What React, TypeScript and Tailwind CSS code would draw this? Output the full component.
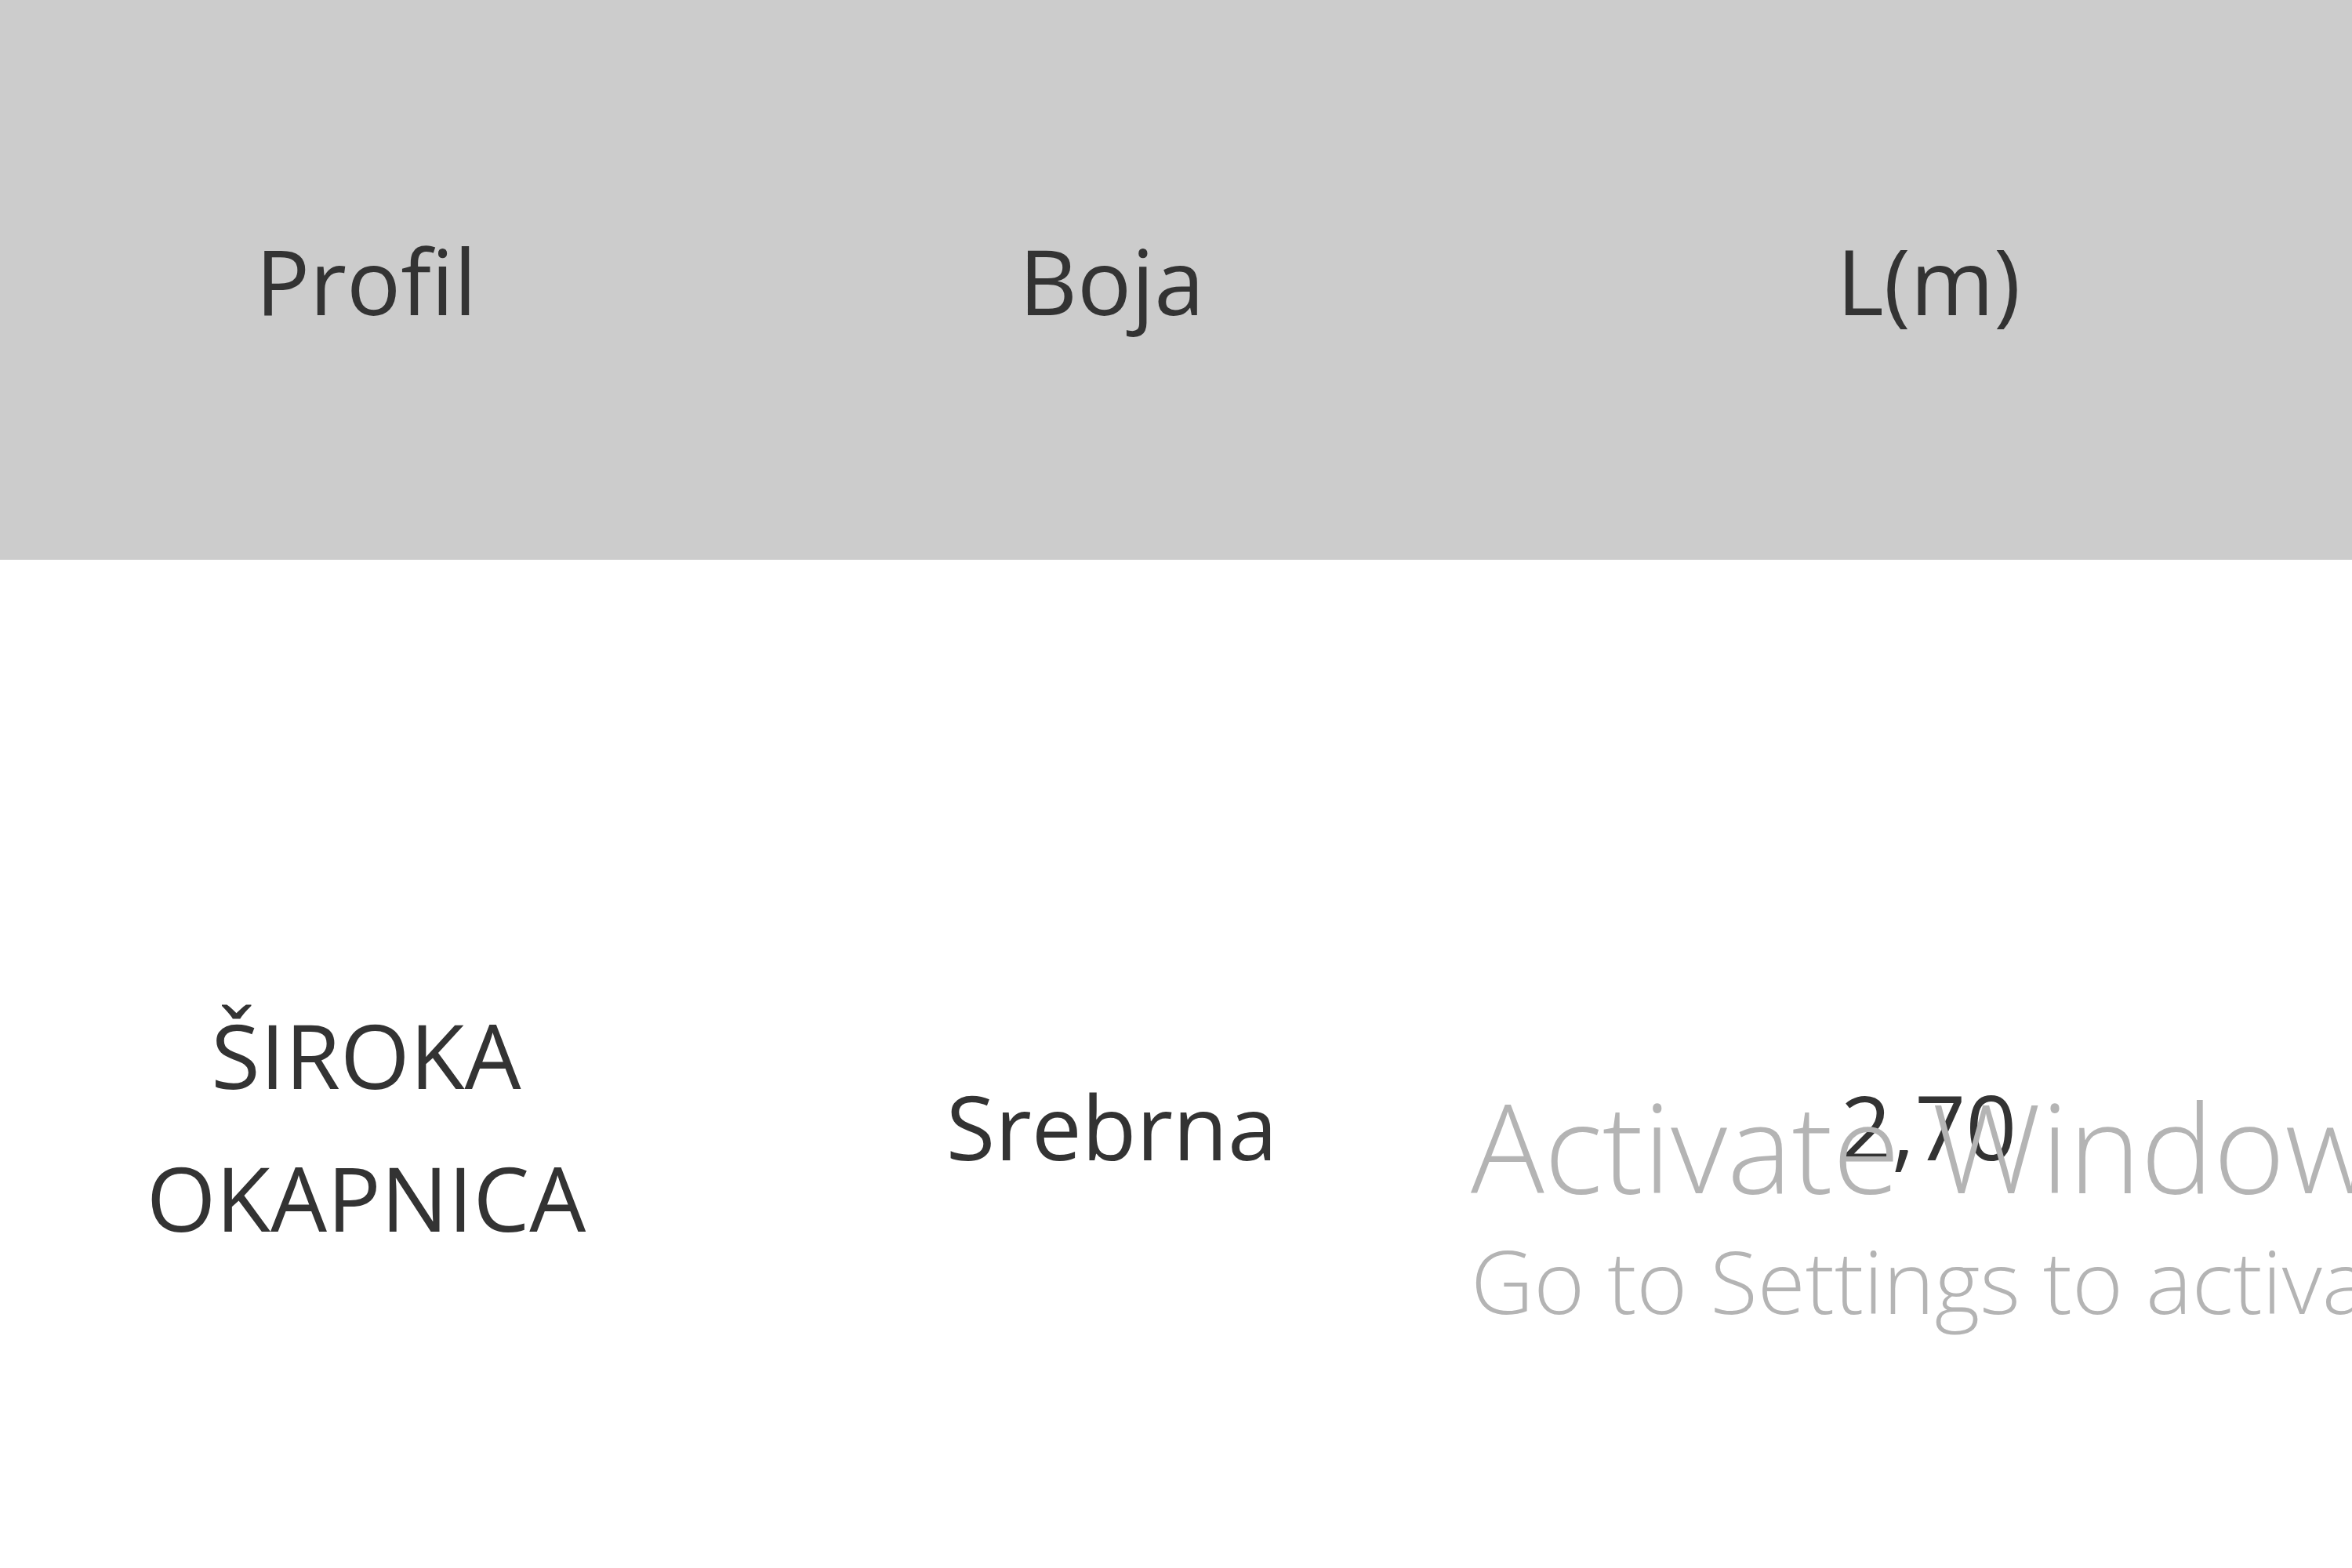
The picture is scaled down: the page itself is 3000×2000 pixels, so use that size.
export default function App() {
  const font = { fontFamily: '"Open Sans", "Noto Sans", sans-serif' };

  return (
    <div className="relative w-[3000px] h-[2000px] overflow-hidden bg-white text-[#333333]" style={font}>
      <table className="border-collapse table-fixed w-[3300px]">
        <colgroup>
          <col className="w-[934px]" />
          <col className="w-[968px]" />
          <col className="w-[1116px]" />
          <col className="w-[282px]" />
        </colgroup>
        <thead>
          <tr className="bg-[#cccccc] h-[714px]">
            <th className="font-normal text-[115px] leading-none text-center align-middle">Profil</th>
            <th className="font-normal text-[115px] leading-none text-center align-middle">Boja</th>
            <th className="font-normal text-[115px] leading-none text-center align-middle">L(m)</th>
            <th />
          </tr>
        </thead>
        <tbody>
          <tr className="h-[1444px]">
            <td className="text-center align-middle text-[114px] leading-[182px]">
              <span className="inline-block w-min">ŠIROKA OKAPNICA</span>
            </td>
            <td className="text-center align-middle text-[114px] leading-[182px]">Srebrna</td>
            <td className="text-center align-middle text-[114px] leading-[182px]">2,70</td>
            <td />
          </tr>
        </tbody>
      </table>

      {/* system watermark lying over the table */}
      <div className="absolute left-[1876px] top-[1372px] text-[#b4b4b4] pointer-events-none whitespace-nowrap">
        <div className="text-[156px] leading-[180px] font-light">Activate Windows</div>
        <div className="text-[111px] leading-[130px] font-light mt-[16px]">Go to Settings to activate Windows.</div>
      </div>
    </div>
  );
}
